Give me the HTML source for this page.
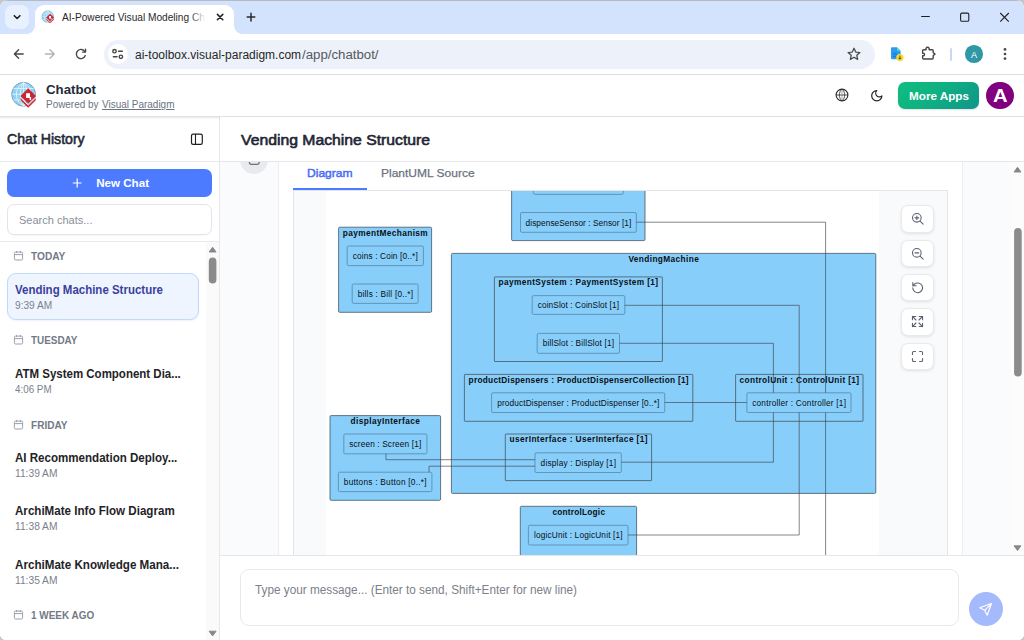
<!DOCTYPE html>
<html lang="en">
<head>
<meta charset="utf-8">
<title>AI-Powered Visual Modeling Chatbot</title>
<style>
html,body{margin:0;padding:0;width:1024px;height:640px;overflow:hidden;background:#c6c6c6;}
body{font-family:"Liberation Sans",Arial,sans-serif;}
#win{position:absolute;left:0;top:0;width:1024px;height:640px;overflow:hidden;background:#fff;border-radius:8px 8px 6px 6px;}
#win>*, #content>*, #dgm>*{position:absolute;}
.t{position:absolute;white-space:pre;line-height:0;transform-origin:0 100%;font-family:"Liberation Sans",Arial,sans-serif;}
.t i{display:inline-block;width:0;height:30px;vertical-align:baseline;}
.ic{position:absolute;overflow:visible;}
#tabstrip{left:0;top:0;width:1024px;height:34px;background:#d3e3fd;border-top:1px solid #b7b9be;box-sizing:border-box;}
#tabsearch{left:5px;top:5px;width:24px;height:24px;border-radius:8px;background:#e9f0fe;}
#tab{left:35px;top:5px;width:198.6px;height:29px;background:#fff;border-radius:9px 9px 0 0;}
#tab .curve{position:absolute;bottom:0;width:8px;height:8px;background:radial-gradient(circle at 0 0,rgba(255,255,255,0) 7.5px,#fff 8px);}
#tab .curve.l{left:-8px;}
#tab .curve.r{right:-8px;transform:scaleX(-1);}
#tabfade{left:190px;top:8px;width:18px;height:20px;background:linear-gradient(90deg,rgba(255,255,255,0),#fff 85%);z-index:4;}
#toolbar{left:0;top:34px;width:1024px;height:40px;background:#fff;border-radius:9px 9px 0 0;}
#omni{left:103.6px;top:40px;width:771.4px;height:28.5px;border-radius:14.25px;background:#edf2fa;}
#siteinfo{left:107.5px;top:44px;width:20px;height:20px;border-radius:10px;background:#fff;}
#tbsep{left:950px;top:47.5px;width:1.5px;height:13px;background:#c9d8f4;border-radius:1px;}
#chav{left:965.2px;top:45.2px;width:17.6px;height:17.6px;border-radius:50%;background:#2f98a4;}
#tbline{left:0;top:74px;width:1024px;height:1px;background:#dfdfe1;}
#apphead{left:0;top:75px;width:1024px;height:41px;background:#fff;border-bottom:1px solid #dfe1e6;box-shadow:0 1px 2px rgba(0,0,0,0.10);z-index:2;}
#win>.t,#win>.ic{z-index:3;}
#moreapps{left:898.4px;top:81.5px;width:81px;height:27.4px;border-radius:7px;background:linear-gradient(135deg,#0fbe7f 0%,#10b082 45%,#0e968a 100%);box-shadow:0 1px 2px rgba(0,0,0,0.12);z-index:3;}
#avatar{left:986.2px;top:81.5px;width:27.6px;height:27.6px;border-radius:50%;background:#800080;z-index:3;}
#sidebar{left:0;top:117px;width:219px;height:523px;background:#fff;border-right:1px solid #e7e8eb;}
#sbhline{left:0;top:161px;width:219px;height:1px;background:#e9eaed;}
#newchat{left:7px;top:169px;width:205px;height:27.6px;border-radius:7px;background:#4c7bff;}
#search{left:7px;top:204px;width:205px;height:30.5px;box-sizing:border-box;border:1px solid #e3e5e8;border-radius:7px;background:#fff;box-shadow:0 1px 1px rgba(0,0,0,0.03);}
#sbline2{left:0;top:241px;width:219px;height:1px;background:#e9eaed;}
#sbtrack{left:206px;top:242px;width:13px;height:398px;background:#fafafa;}
#active{position:absolute;left:7px;width:192px;height:47.2px;box-sizing:border-box;border:1px solid #c3d9fb;border-radius:9px;background:#eef5ff;box-shadow:0 1px 2px rgba(59,130,246,0.10);}
#main{left:220px;top:117px;width:804px;height:523px;background:#fafbfc;}
#mainhead{left:220px;top:117px;width:804px;height:44px;background:#fff;border-bottom:1px solid #e6e7ea;z-index:2;}
#content{left:220px;top:162px;width:792px;height:393px;overflow:hidden;background:#fafbfc;}
#botav{left:20px;top:-16.4px;width:28px;height:28px;border-radius:50%;background:#e9eaee;}
#card{left:58px;top:-10px;width:685px;height:420px;box-sizing:border-box;background:#fff;border-left:1px solid #ecedf1;border-right:1px solid #ecedf1;}
#tabline{left:73px;top:28px;width:655px;height:1px;background:#e3e5e9;}
#tabul{left:73px;top:26px;width:74px;height:2px;background:#4c7bfd;}
#dgm{left:73px;top:29px;width:655px;height:380px;background:#f9fafc;border-left:1px solid #e3e5e9;border-right:1px solid #e3e5e9;box-sizing:border-box;overflow:hidden;}
#uml{left:32px;top:0;}
.zb{left:607.4px;width:33px;height:27.4px;box-sizing:border-box;border:1px solid #e8eaee;border-radius:7px;background:#fff;box-shadow:0 1px 3px rgba(0,0,0,0.10);}
.zb svg{position:absolute;left:7.9px;top:5.1px;}
#pgtrack{left:1011px;top:162px;width:13px;height:394px;background:#fcfcfc;}
#inputbar{left:220px;top:555px;width:804px;height:85px;background:#fff;border-top:1px solid #e4e6ea;box-sizing:border-box;}
#inputbox{left:240px;top:569.4px;width:718.6px;height:56.4px;box-sizing:border-box;border:1px solid #e7e8ec;border-radius:9px;background:#fff;}
#send{left:968.5px;top:592px;width:34px;height:34px;border-radius:50%;background:#a4bafc;}
#send svg{position:absolute;left:8.6px;top:8.6px;}

</style>
</head>
<body>
<div id="win">
<div id="tabstrip"></div>
<div id="tabsearch"><svg width="24" height="24" viewBox="0 0 24 24"><path d="M9.3 10.7 L12.1 13.5 L14.9 10.7" fill="none" stroke="#1f1f1f" stroke-width="1.6" stroke-linecap="round" stroke-linejoin="round"/></svg></div>
<div id="tab"><div class="curve l"></div><div class="curve r"></div></div>
<svg class="ic" style="left:36.1px;top:7.3px;z-index:3" width="24" height="20" viewBox="0 75 48 40">
<circle cx="23.6" cy="94.3" r="11.9" fill="#8ed2f6" stroke="#7da4b3" stroke-width="1"/>
<g stroke="#e3f4fd" stroke-width="0.9" fill="none">
<path d="M12.2 94.3h22.8M13.6 88.6h20M13.600 100h20"/>
<path d="M23.6 82.800v23M23.6 82.800c-4.200 3.600-4.200 19.400 0 23M23.6 82.800c4.200 3.600 4.200 19.400 0 23M23.6 82.800c-9.600 4.200-9.600 18.800 0 23M23.6 82.800c9.600 4.200 9.600 18.800 0 23"/>
</g>
<path d="M20.600 97.400 L28.200 104.800 L35.800 97.400 L35.800 100.300 L28.200 107.700 L20.600 100.300 Z" fill="#cc2630"/>
<path d="M20.300 97.500 L28.200 105.200 L36.100 97.500" fill="none" stroke="#fff" stroke-width="0.9"/>
<path d="M28.200 88.300 L36 95.900 L28.200 103.500 L20.400 95.900 Z" fill="#cc2630"/>
<path d="M26.100 93.200 h3.900 v3.700 h1.100 v3 h-1.500 v-1.900 h-3.500 z" fill="#fff"/>
</svg>
<div class="t" style="left:62.00px;top:-8.70px;font-size:10.6px;font-weight:400;color:#2a2a2a;transform:scaleX(0.9567);z-index:3;"><i></i>AI-Powered Visual Modeling Ch</div>
<div id="tabfade"></div>
<svg class="ic" style="left:214px;top:11px" width="12" height="12" viewBox="0 0 12 12"><path d="M3.4 3.4 L8.800 8.800 M8.800 3.400 L3.400 8.800" stroke="#1f1f1f" stroke-width="1.5" stroke-linecap="round"/></svg>
<svg class="ic" style="left:243.6px;top:10px" width="14" height="14" viewBox="0 0 14 14"><path d="M7 3.3 V10.9 M3.200 7.100 H10.800" stroke="#2a2a2a" stroke-width="1.5" stroke-linecap="round"/></svg>
<svg class="ic" style="left:915px;top:7px" width="100" height="20" viewBox="0 0 100 20"><path d="M6.2 9.5 H14.8" stroke="#1f1f1f" stroke-width="1.1" fill="none"/><rect x="45.6" y="6.1" width="8.2" height="8.2" rx="1.4" fill="none" stroke="#1f1f1f" stroke-width="1.1"/><path d="M85.2 6 L93.8 14.6 M93.8 6 L85.2 14.6" stroke="#1f1f1f" stroke-width="1.1" fill="none"/></svg>
<div id="toolbar"></div>
<svg class="ic" style="left:0;top:34px" width="104" height="40" viewBox="0 0 104 40">
<path d="M23.2 20 H14.6 M18.6 15.8 L14.4 20 L18.6 24.2" fill="none" stroke="#474747" stroke-width="1.4" stroke-linecap="round" stroke-linejoin="round"/>
<path d="M45.4 20 H54 M50 15.8 L54.2 20 L50 24.2" fill="none" stroke="#b4b4b4" stroke-width="1.4" stroke-linecap="round" stroke-linejoin="round"/>
<path d="M84.9 17.6 A4.6 4.6 0 1 0 85.3 21.6" fill="none" stroke="#474747" stroke-width="1.4" stroke-linecap="round"/>
<path d="M85.5 15.2 V18.1 H82.6" fill="none" stroke="#474747" stroke-width="1.4" stroke-linecap="round" stroke-linejoin="round"/>
</svg>
<div id="omni"></div>
<div id="siteinfo"></div>
<svg class="ic" style="left:108px;top:44px" width="20" height="20" viewBox="0 0 20 20">
<circle cx="6.5" cy="7.2" r="1.7" fill="none" stroke="#474747" stroke-width="1.4"/>
<path d="M10.6 7.2 H14.3" stroke="#474747" stroke-width="1.5" stroke-linecap="round"/>
<circle cx="12.9" cy="12.8" r="1.7" fill="none" stroke="#474747" stroke-width="1.4"/>
<path d="M5.4 12.8 H9" stroke="#474747" stroke-width="1.5" stroke-linecap="round"/>
</svg>
<div class="t" style="left:135.00px;top:28.80px;font-size:12px;font-weight:400;color:#262626;"><i></i>ai-toolbox.visual-paradigm.com</div>
<div class="t" style="left:301.50px;top:28.80px;font-size:12px;font-weight:400;color:#55585c;transform:scaleX(1.1025);"><i></i>/app/chatbot/</div>
<svg class="ic" style="left:846px;top:46px" width="16" height="16" viewBox="0 0 16 16"><path d="M8 2.2 L9.75 6.05 L13.9 6.5 L10.8 9.3 L11.65 13.4 L8 11.3 L4.35 13.4 L5.2 9.3 L2.1 6.5 L6.25 6.05 Z" fill="none" stroke="#474747" stroke-width="1.25" stroke-linejoin="round"/></svg>
<svg class="ic" style="left:889px;top:46px" width="16" height="16" viewBox="0 0 16 16">
<path d="M2 2.2 a1 1 0 0 1 1-1 h5 l3.6 3.6 v7.4 a1 1 0 0 1 -1 1 h-7.6 a1 1 0 0 1 -1-1 z" fill="#2d9cf0"/>
<path d="M8 1.2 l3.6 3.6 h-3.6 z" fill="#46e0c8"/>
<path d="M4 7h4M4 8.8h4M4 10.6h3" stroke="#1e78c8" stroke-width="0.9"/>
<circle cx="10.9" cy="11.6" r="3.6" fill="#fbdb2c"/>
<path d="M10.9 9.6v3.4M9.4 11.8l1.5 1.5 1.5-1.5" stroke="#4a4a3a" stroke-width="1" fill="none"/>
</svg>
<svg class="ic" style="left:916px;top:40px" width="24" height="24" viewBox="916 40 24 24">
<path d="M923.6 49.700 H926.100 A1.700 1.700 0 1 1 929.100 49.700 H932.200 Q933.200 49.700 933.200 50.700 V52.700 L935 54.100 L933.200 55.500 V58 Q933.200 59 932.200 59 H923.600 Q922.600 59 922.600 58 V55.700 H923.300 A1.250 1.250 0 0 0 923.300 53.200 H922.600 V50.700 Q922.600 49.700 923.600 49.700 Z" fill="none" stroke="#474747" stroke-width="1.4" stroke-linejoin="round"/>
</svg>
<div id="tbsep"></div>
<div id="chav"></div>
<div class="t" style="left:970.90px;top:27.60px;font-size:9.2px;font-weight:400;color:#fff;"><i></i>A</div>
<svg class="ic" style="left:1000px;top:44px" width="10" height="20" viewBox="0 0 10 20"><circle cx="5" cy="5.4" r="1.35" fill="#474747"/><circle cx="5" cy="10" r="1.35" fill="#474747"/><circle cx="5" cy="14.6" r="1.35" fill="#474747"/></svg>
<div id="tbline"></div>
<div id="apphead"></div>
<svg class="ic" style="left:0;top:75px" width="48" height="40" viewBox="0 75 48 40">
<circle cx="23.6" cy="94.3" r="11.9" fill="#8ed2f6" stroke="#7da4b3" stroke-width="1"/>
<g stroke="#e3f4fd" stroke-width="0.9" fill="none">
<path d="M12.2 94.3h22.8M13.6 88.6h20M13.600 100h20"/>
<path d="M23.6 82.800v23M23.6 82.800c-4.200 3.600-4.200 19.400 0 23M23.6 82.800c4.200 3.600 4.200 19.400 0 23M23.6 82.800c-9.600 4.200-9.600 18.800 0 23M23.6 82.800c9.600 4.200 9.600 18.800 0 23"/>
</g>
<path d="M20.600 97.400 L28.200 104.800 L35.800 97.400 L35.800 100.300 L28.200 107.700 L20.600 100.300 Z" fill="#cc2630"/>
<path d="M20.300 97.500 L28.200 105.200 L36.100 97.500" fill="none" stroke="#fff" stroke-width="0.9"/>
<path d="M28.200 88.300 L36 95.900 L28.200 103.500 L20.400 95.900 Z" fill="#cc2630"/>
<path d="M26.100 93.200 h3.900 v3.700 h1.100 v3 h-1.500 v-1.900 h-3.500 z" fill="#fff"/>
</svg>
<div class="t" style="left:46.00px;top:64.30px;font-size:12.5px;font-weight:700;color:#242b38;transform:scaleX(1.0590);"><i></i>Chatbot</div>
<div class="t" style="left:46.00px;top:78.30px;font-size:10.8px;font-weight:400;color:#6b7280;transform:scaleX(0.9205);"><i></i>Powered by</div>
<div class="t" style="left:102.00px;top:78.30px;font-size:10.8px;font-weight:400;color:#6b7280;transform:scaleX(0.9242);text-decoration:underline;text-underline-offset:1px;"><i></i>Visual Paradigm</div>
<svg class="ic" style="left:833.5px;top:86.5px" width="16" height="16" viewBox="0 0 16 16" fill="none" stroke="#262626">
<circle cx="8" cy="8" r="5.900" stroke-width="1.100"/>
<path d="M8 2.100 C4.400 5.200 4.400 10.800 8 13.900 M8 2.100 C11.600 5.200 11.600 10.800 8 13.900" stroke-width="0.800"/>
<path d="M2.100 8h11.800" stroke-width="0.800"/>
<path d="M8 2.100v11.800" stroke-width="0.500" stroke="#555"/>
</svg>
<svg class="ic" style="left:869.7px;top:89px" width="13.6" height="13.6" viewBox="0 0 24 24" fill="none" stroke="#1f1f1f" stroke-width="2.100" stroke-linejoin="round" stroke-linecap="round">
<path d="M12 3a6 6 0 0 0 9 9 9 9 0 1 1-9-9Z"/>
</svg>
<div id="moreapps"></div>
<div class="t" style="left:909.00px;top:69.90px;font-size:11.5px;font-weight:700;color:#fff;transform:scaleX(1.0170);"><i></i>More Apps</div>
<div id="avatar"></div>
<div class="t" style="left:992.70px;top:72.20px;font-size:19px;font-weight:700;color:#fff;transform:scaleX(1.0640);"><i></i>A</div>
<div id="sidebar"></div>
<div class="t" style="left:7.00px;top:114.30px;font-size:14.4px;font-weight:400;color:#1f2937;-webkit-text-stroke:0.58px #1f2937;transform:scaleX(0.9809);"><i></i>Chat History</div>
<svg class="ic" style="left:189px;top:131px" width="16" height="16" viewBox="0 0 16 16"><rect x="2.5" y="3.1" width="10.8" height="10.2" rx="1.6" fill="none" stroke="#1f1f1f" stroke-width="1.2"/><path d="M6.5 3.1v10.2" stroke="#1f1f1f" stroke-width="1.1"/></svg>
<div id="sbhline"></div>
<div id="newchat"></div>
<svg class="ic" style="left:71px;top:177px" width="12" height="12" viewBox="0 0 12 12"><path d="M6.2 1.6v8.8M1.8 6h8.8" stroke="#fff" stroke-width="1.2" fill="none"/></svg>
<div class="t" style="left:96.20px;top:157.00px;font-size:11.6px;font-weight:700;color:#fff;"><i></i>New Chat</div>
<div id="search"></div>
<div class="t" style="left:18.50px;top:194.20px;font-size:11.8px;font-weight:400;color:#8a8f98;transform:scaleX(0.9339);"><i></i>Search chats...</div>
<div id="sbline2"></div>
<div id="sbtrack"></div>
<svg class="ic" style="left:206px;top:242px" width="13" height="398" viewBox="0 0 13 398"><path d="M3.1 10 L6.6 5.2 L10.1 10 Z" fill="#878787" stroke="#878787" stroke-width="0.9" stroke-linejoin="round"/><rect x="2.8" y="15.6" width="7.6" height="26" rx="3.8" fill="#8b8b8b"/><path d="M3.1 389.2 L6.6 394 L10.1 389.200 Z" fill="#878787" stroke="#878787" stroke-width="0.9" stroke-linejoin="round"/></svg>
<svg class="ic" style="left:13px;top:249.9px" width="11" height="11" viewBox="0 0 11 11"><rect x="1.4" y="2.1" width="8.2" height="7.9" rx="1.2" fill="none" stroke="#9aa1ad" stroke-width="1"/><path d="M1.4 4.6h8.2M3.6 0.9v2.2M7.4 0.9v2.2" stroke="#9aa1ad" stroke-width="1" fill="none"/></svg>
<div class="t" style="left:31.20px;top:230.20px;font-size:10.3px;font-weight:700;color:#737a86;transform:scaleX(0.9851);"><i></i>TODAY</div>
<div id="active" style="top:273.0px"></div>
<div class="t" style="left:14.75px;top:264.20px;font-size:12px;font-weight:700;color:#3b3f9e;transform:scaleX(0.9567);"><i></i>Vending Machine Structure</div>
<div class="t" style="left:14.75px;top:279.40px;font-size:10.6px;font-weight:400;color:#7b818c;transform:scaleX(0.9565);"><i></i>9:39 AM</div>
<svg class="ic" style="left:13px;top:333.8px" width="11" height="11" viewBox="0 0 11 11"><rect x="1.4" y="2.1" width="8.2" height="7.9" rx="1.2" fill="none" stroke="#9aa1ad" stroke-width="1"/><path d="M1.4 4.6h8.2M3.6 0.9v2.2M7.4 0.9v2.2" stroke="#9aa1ad" stroke-width="1" fill="none"/></svg>
<div class="t" style="left:31.20px;top:314.10px;font-size:10.3px;font-weight:700;color:#737a86;transform:scaleX(0.9633);"><i></i>TUESDAY</div>
<div class="t" style="left:14.75px;top:348.00px;font-size:12px;font-weight:700;color:#1f2328;transform:scaleX(0.9577);"><i></i>ATM System Component Dia...</div>
<div class="t" style="left:14.75px;top:363.40px;font-size:10.6px;font-weight:400;color:#7b818c;transform:scaleX(0.9271);"><i></i>4:06 PM</div>
<svg class="ic" style="left:13px;top:418.9px" width="11" height="11" viewBox="0 0 11 11"><rect x="1.4" y="2.1" width="8.2" height="7.9" rx="1.2" fill="none" stroke="#9aa1ad" stroke-width="1"/><path d="M1.4 4.6h8.2M3.6 0.9v2.2M7.4 0.9v2.2" stroke="#9aa1ad" stroke-width="1" fill="none"/></svg>
<div class="t" style="left:31.20px;top:399.20px;font-size:10.3px;font-weight:700;color:#737a86;transform:scaleX(0.9761);"><i></i>FRIDAY</div>
<div class="t" style="left:14.75px;top:432.20px;font-size:12px;font-weight:700;color:#1f2328;transform:scaleX(0.9634);"><i></i>AI Recommendation Deploy...</div>
<div class="t" style="left:14.75px;top:447.40px;font-size:10.6px;font-weight:400;color:#7b818c;transform:scaleX(0.9659);"><i></i>11:39 AM</div>
<div class="t" style="left:14.75px;top:485.40px;font-size:12px;font-weight:700;color:#1f2328;transform:scaleX(0.9658);"><i></i>ArchiMate Info Flow Diagram</div>
<div class="t" style="left:14.75px;top:500.40px;font-size:10.6px;font-weight:400;color:#7b818c;transform:scaleX(0.9659);"><i></i>11:38 AM</div>
<div class="t" style="left:14.75px;top:538.60px;font-size:12px;font-weight:700;color:#1f2328;transform:scaleX(0.9683);"><i></i>ArchiMate Knowledge Mana...</div>
<div class="t" style="left:14.75px;top:554.40px;font-size:10.6px;font-weight:400;color:#7b818c;transform:scaleX(0.9659);"><i></i>11:35 AM</div>
<svg class="ic" style="left:13px;top:609.1px" width="11" height="11" viewBox="0 0 11 11"><rect x="1.4" y="2.1" width="8.2" height="7.9" rx="1.2" fill="none" stroke="#9aa1ad" stroke-width="1"/><path d="M1.4 4.6h8.2M3.6 0.9v2.2M7.4 0.9v2.2" stroke="#9aa1ad" stroke-width="1" fill="none"/></svg>
<div class="t" style="left:31.20px;top:589.40px;font-size:10.3px;font-weight:700;color:#737a86;transform:scaleX(0.9659);"><i></i>1 WEEK AGO</div>
<div id="main"></div>
<div id="mainhead"></div>
<div class="t" style="left:241.00px;top:115.00px;font-size:14.9px;font-weight:400;color:#1f2533;-webkit-text-stroke:0.60px #1f2533;transform:scaleX(1.0574);"><i></i>Vending Machine Structure</div>
<div id="content">
<div id="botav"></div>
<svg class="ic" style="left:26px;top:-6px" width="16" height="12" viewBox="0 0 16 12"><rect x="3.4" y="1" width="9.800" height="7.400" rx="1.800" fill="none" stroke="#6b7280" stroke-width="1.300"/></svg>
<div id="card"></div>
<div class="t" style="left:87.00px;top:-14.80px;font-size:11.4px;font-weight:400;color:#4a6cf7;-webkit-text-stroke:0.46px #4a6cf7;transform:scaleX(1.0604);"><i></i>Diagram</div>
<div class="t" style="left:161.00px;top:-14.80px;font-size:11.4px;font-weight:400;color:#6b7280;-webkit-text-stroke:0.25px #6b7280;transform:scaleX(1.0536);"><i></i>PlantUML Source</div>
<div id="tabline"></div><div id="tabul"></div>
<div id="dgm">
<svg id="uml" width="553" height="364" viewBox="0 0 553 364" font-family="'Liberation Sans', Arial, sans-serif"><rect width="553" height="364" fill="#fff"/><rect x="185.60" y="-41.00" width="133.40" height="90.60" rx="1.2" fill="#87cefa" stroke="#475763" stroke-width="0.8"/><rect x="207.40" y="-16.00" width="90.00" height="19.40" rx="1.8" fill="#87cefa" stroke="#5b87a6" stroke-width="0.8"/><rect x="194.50" y="21.50" width="115.80" height="19.80" rx="1.3" fill="#87cefa" stroke="#5b87a6" stroke-width="0.8"/><text x="199.60" y="34.60" font-size="8.3" font-weight="normal" fill="#0a0e13" text-anchor="start" letter-spacing="0.056">dispenseSensor : Sensor [1]</text><rect x="12.60" y="36.20" width="93.00" height="85.10" rx="1.1" fill="#87cefa" stroke="#475763" stroke-width="0.8"/><text x="16.80" y="44.60" font-size="8.3" font-weight="bold" fill="#0a0e13" text-anchor="start" letter-spacing="0.372">paymentMechanism</text><rect x="21.20" y="55.00" width="76.20" height="19.60" rx="1.3" fill="#87cefa" stroke="#5b87a6" stroke-width="0.8"/><text x="26.70" y="68.30" font-size="8.3" font-weight="normal" fill="#0a0e13" text-anchor="start" letter-spacing="0.132">coins : Coin [0..*]</text><rect x="26.20" y="93.00" width="65.90" height="19.40" rx="1.3" fill="#87cefa" stroke="#5b87a6" stroke-width="0.8"/><text x="31.70" y="106.00" font-size="8.3" font-weight="normal" fill="#0a0e13" text-anchor="start" letter-spacing="0.202">bills : Bill [0..*]</text><rect x="125.40" y="62.40" width="424.40" height="240.00" rx="1.1" fill="#87cefa" stroke="#475763" stroke-width="0.8"/><text x="302.40" y="70.80" font-size="8.3" font-weight="bold" fill="#0a0e13" text-anchor="start" letter-spacing="0.379">VendingMachine</text><rect x="168.40" y="85.90" width="168.00" height="84.60" rx="0.5" fill="#87cefa" stroke="#475763" stroke-width="0.8"/><text x="172.60" y="94.10" font-size="8.3" font-weight="bold" fill="#0a0e13" text-anchor="start" letter-spacing="0.373">paymentSystem : PaymentSystem [1]</text><rect x="206.20" y="104.60" width="92.60" height="18.80" rx="1.3" fill="#87cefa" stroke="#5b87a6" stroke-width="0.8"/><text x="211.70" y="117.00" font-size="8.3" font-weight="normal" fill="#0a0e13" text-anchor="start" letter-spacing="0.090">coinSlot : CoinSlot [1]</text><rect x="211.20" y="142.40" width="82.30" height="19.90" rx="1.3" fill="#87cefa" stroke="#5b87a6" stroke-width="0.8"/><text x="216.70" y="155.30" font-size="8.3" font-weight="normal" fill="#0a0e13" text-anchor="start" letter-spacing="0.139">billSlot : BillSlot [1]</text><rect x="138.40" y="183.40" width="228.40" height="46.90" rx="0.5" fill="#87cefa" stroke="#475763" stroke-width="0.8"/><text x="142.60" y="191.60" font-size="8.3" font-weight="bold" fill="#0a0e13" text-anchor="start" letter-spacing="0.265">productDispensers : ProductDispenserCollection [1]</text><rect x="165.60" y="201.80" width="173.10" height="19.70" rx="1.3" fill="#87cefa" stroke="#5b87a6" stroke-width="0.8"/><text x="171.20" y="214.60" font-size="8.3" font-weight="normal" fill="#0a0e13" text-anchor="start" letter-spacing="0.120">productDispenser : ProductDispenser [0..*]</text><rect x="409.60" y="183.40" width="127.40" height="46.90" rx="0.5" fill="#87cefa" stroke="#475763" stroke-width="0.8"/><text x="413.60" y="191.60" font-size="8.3" font-weight="bold" fill="#0a0e13" text-anchor="start" letter-spacing="0.347">controlUnit : ControlUnit [1]</text><rect x="420.90" y="201.80" width="104.10" height="19.70" rx="1.3" fill="#87cefa" stroke="#5b87a6" stroke-width="0.8"/><text x="426.20" y="214.60" font-size="8.3" font-weight="normal" fill="#0a0e13" text-anchor="start" letter-spacing="0.202">controller : Controller [1]</text><rect x="179.30" y="243.00" width="146.30" height="46.60" rx="0.5" fill="#87cefa" stroke="#475763" stroke-width="0.8"/><text x="183.50" y="251.20" font-size="8.3" font-weight="bold" fill="#0a0e13" text-anchor="start" letter-spacing="0.410">userInterface : UserInterface [1]</text><rect x="209.00" y="261.80" width="86.30" height="19.70" rx="1.3" fill="#87cefa" stroke="#5b87a6" stroke-width="0.8"/><text x="214.60" y="274.60" font-size="8.3" font-weight="normal" fill="#0a0e13" text-anchor="start" letter-spacing="0.196">display : Display [1]</text><rect x="4.00" y="224.60" width="110.60" height="84.70" rx="1.1" fill="#87cefa" stroke="#475763" stroke-width="0.8"/><text x="24.60" y="232.80" font-size="8.3" font-weight="bold" fill="#0a0e13" text-anchor="start" letter-spacing="0.401">displayInterface</text><rect x="17.80" y="243.00" width="83.10" height="19.80" rx="1.3" fill="#87cefa" stroke="#5b87a6" stroke-width="0.8"/><text x="23.20" y="256.10" font-size="8.3" font-weight="normal" fill="#0a0e13" text-anchor="start" letter-spacing="0.131">screen : Screen [1]</text><rect x="12.40" y="281.20" width="93.50" height="19.40" rx="1.3" fill="#87cefa" stroke="#5b87a6" stroke-width="0.8"/><text x="17.80" y="293.90" font-size="8.3" font-weight="normal" fill="#0a0e13" text-anchor="start" letter-spacing="0.241">buttons : Button [0..*]</text><rect x="194.30" y="315.30" width="116.30" height="93.70" rx="1.1" fill="#87cefa" stroke="#475763" stroke-width="0.8"/><text x="226.50" y="323.60" font-size="8.3" font-weight="bold" fill="#0a0e13" text-anchor="start" letter-spacing="0.205">controlLogic</text><rect x="202.40" y="334.30" width="99.60" height="19.70" rx="1.3" fill="#87cefa" stroke="#5b87a6" stroke-width="0.8"/><text x="208.00" y="347.30" font-size="8.3" font-weight="normal" fill="#0a0e13" text-anchor="start" letter-spacing="0.156">logicUnit : LogicUnit [1]</text><path d="M310.30 31.20 L499.60 31.20 L499.60 201.80" fill="none" stroke="#3f444a" stroke-width="0.65"/><path d="M499.60 221.50 L499.60 409.00" fill="none" stroke="#3f444a" stroke-width="0.65"/><path d="M298.80 114.30 L473.20 114.30 L473.20 201.80" fill="none" stroke="#3f444a" stroke-width="0.65"/><path d="M293.50 152.30 L447.40 152.30 L447.40 201.80" fill="none" stroke="#3f444a" stroke-width="0.65"/><path d="M338.70 211.50 L420.90 211.50" fill="none" stroke="#3f444a" stroke-width="0.65"/><path d="M295.30 271.20 L447.40 271.20 L447.40 221.50" fill="none" stroke="#3f444a" stroke-width="0.65"/><path d="M302.00 344.00 L473.20 344.00 L473.20 221.50" fill="none" stroke="#3f444a" stroke-width="0.65"/><path d="M60.00 262.80 L60.00 268.70 L209.00 268.70" fill="none" stroke="#3f444a" stroke-width="0.65"/><path d="M103.00 281.20 L103.00 275.20 L209.00 275.20" fill="none" stroke="#3f444a" stroke-width="0.65"/></svg>
<div class="zb" style="top:14.2px"><svg width="15" height="15" viewBox="0 0 16 16" fill="none" stroke="#596170" stroke-width="1.15" stroke-linecap="round" stroke-linejoin="round"><circle cx="7.3" cy="7.3" r="4.6"/><path d="M10.7 10.7 L14 14 M5.3 7.3h4M7.3 5.3v4"/></svg></div>
<div class="zb" style="top:48.6px"><svg width="15" height="15" viewBox="0 0 16 16" fill="none" stroke="#596170" stroke-width="1.15" stroke-linecap="round" stroke-linejoin="round"><circle cx="7.3" cy="7.3" r="4.6"/><path d="M10.7 10.7 L14 14 M5.3 7.3h4"/></svg></div>
<div class="zb" style="top:83.0px"><svg width="15" height="15" viewBox="0 0 16 16" fill="none" stroke="#596170" stroke-width="1.15" stroke-linecap="round" stroke-linejoin="round"><path d="M3 8.4 a5.2 5.2 0 1 0 1.7 -3.9 L3 6.2 M3 2.6 V6.2 H6.6"/></svg></div>
<div class="zb" style="top:117.4px"><svg width="15" height="15" viewBox="0 0 16 16" fill="none" stroke="#596170" stroke-width="1.15" stroke-linecap="round" stroke-linejoin="round"><path d="M9.8 2.6h3.6v3.6M13.4 2.6L9.6 6.4M6.2 13.4H2.6V9.8M2.6 13.4L6.4 9.6M13.4 9.8v3.6H9.8M13.4 13.4L9.6 9.6M2.6 6.2V2.6h3.6M2.6 2.6L6.4 6.4"/></svg></div>
<div class="zb" style="top:151.8px"><svg width="15" height="15" viewBox="0 0 16 16" fill="none" stroke="#596170" stroke-width="1.15" stroke-linecap="round" stroke-linejoin="round"><path d="M2.6 5.8V4a1.4 1.4 0 0 1 1.4-1.4h1.8M10.2 2.6H12a1.4 1.4 0 0 1 1.4 1.4v1.8M13.4 10.2V12a1.4 1.4 0 0 1-1.4 1.4h-1.8M5.8 13.4H4A1.4 1.4 0 0 1 2.6 12v-1.8"/></svg></div>
</div>
</div>
<div id="pgtrack"></div>
<svg class="ic" style="left:1012px;top:162px" width="12" height="394" viewBox="0 0 12 394"><path d="M2 10 L5.5 5.2 L9 10 Z" fill="#878787" stroke="#878787" stroke-width="0.9" stroke-linejoin="round"/><rect x="2.1" y="65.900" width="7.6" height="148.600" rx="3.800" fill="#8b8b8b"/><path d="M2 383.800 L5.5 388.600 L9 383.800 Z" fill="#878787" stroke="#878787" stroke-width="0.9" stroke-linejoin="round"/></svg>
<div id="inputbar"></div>
<div id="inputbox"></div>
<div class="t" style="left:255.00px;top:564.30px;font-size:12.5px;font-weight:400;color:#7b808a;transform:scaleX(0.9410);"><i></i>Type your message... (Enter to send, Shift+Enter for new line)</div>
<div id="send"><svg width="17" height="17" viewBox="0 0 16 16"><path d="M13.6 2.4 L2.6 6.4 L7.2 8.8 L9.6 13.4 Z M7.2 8.8 L13.6 2.4" fill="none" stroke="#fff" stroke-width="1.1" stroke-linejoin="round" stroke-linecap="round"/></svg></div>
</div>
</body>
</html>
